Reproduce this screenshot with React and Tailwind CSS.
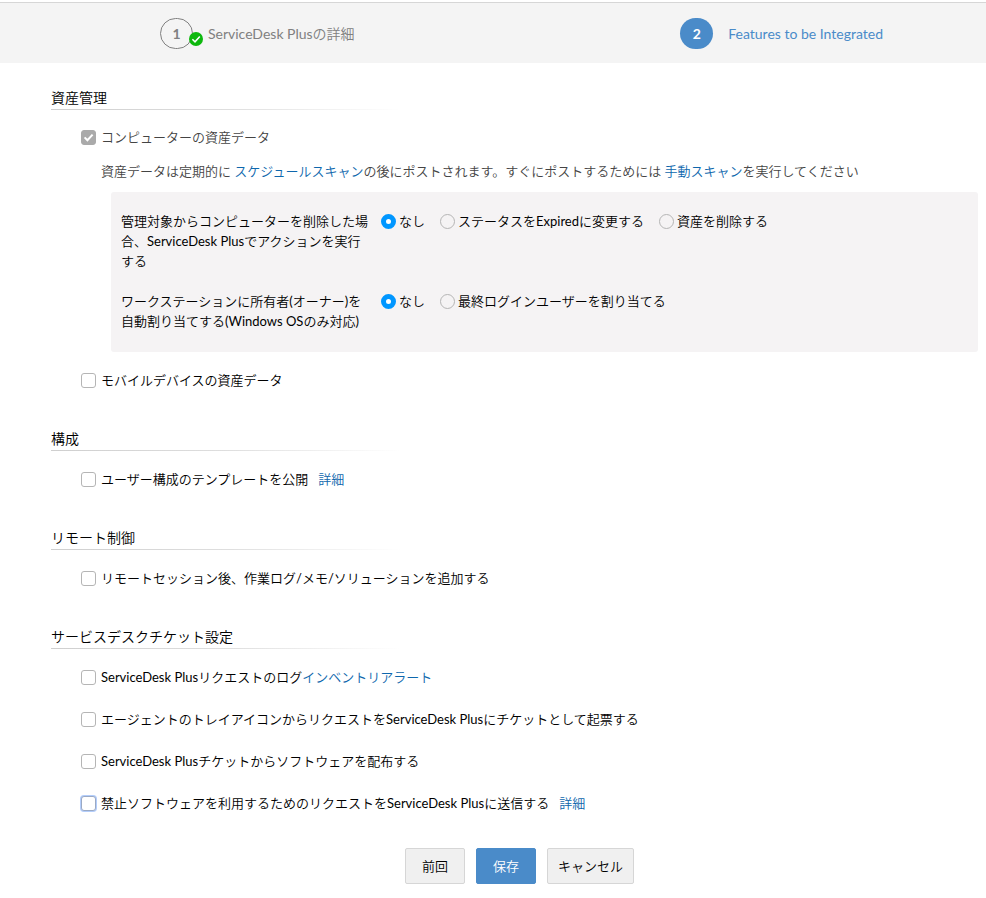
import React, { useState } from 'react';

const CheckMark = ({ className }) => (
  <svg viewBox="0 0 15 15" className={className} fill="none" stroke="#fff" strokeWidth="2" aria-hidden="true">
    <path d="M3.6 7.4 L6.4 10.2 L11.6 4.6" />
  </svg>
);

const SectionTitle = ({ children }) => (
  <div>
    <h2 className="pb-px text-sm leading-5 text-black">{children}</h2>
    <div className="h-px max-w-[350px] bg-gradient-to-r from-[#cfcfcf] via-[#dedede] to-transparent" />
  </div>
);

const CheckRow = ({ id, label, link, spaced, checked, onChange, disabled, focused }) => (
  <div className="flex items-center pl-[30px]">
    <span className="grid h-[15px] w-[15px] shrink-0">
      <input
        id={id}
        type="checkbox"
        checked={checked}
        onChange={onChange}
        disabled={disabled}
        className={`col-start-1 row-start-1 h-[15px] w-[15px] appearance-none rounded-[3px] border bg-white checked:border-[#aaa] checked:bg-[#aaa] ${
          focused ? 'border-[#9aa9c4] ring-1 ring-[#b3cdfb]' : 'border-[#b5b5b5]'
        }`}
      />
      {checked && <CheckMark className="pointer-events-none col-start-1 row-start-1 h-[15px] w-[15px]" />}
    </span>
    <label htmlFor={id} className={`pl-[5px] ${disabled ? 'text-[#444]' : 'text-black'}`}>
      {label}
    </label>
    {link && (
      <a href="#" className={`text-[#0e67ad] ${spaced ? 'ml-[10px]' : ''}`}>
        {link}
      </a>
    )}
  </div>
);

const RadioGroup = ({ name, title, options }) => {
  const [value, setValue] = useState(0);

  return (
    <div role="radiogroup" aria-labelledby={`${name}-title`} className="flex items-start gap-[10px]">
      <div id={`${name}-title`} className="w-[250px] shrink-0">
        {title}
      </div>
      <div className="flex flex-wrap gap-x-[15px]">
        {options.map((option, i) => (
          <label key={option} className="flex items-center gap-[3px]">
            <input
              type="radio"
              name={name}
              checked={value === i}
              onChange={() => setValue(i)}
              className="h-[15px] w-[15px] appearance-none rounded-full border border-[#b5b5b5] bg-transparent checked:border-5 checked:border-[#0096ff] checked:bg-white"
            />
            {option}
          </label>
        ))}
      </div>
    </div>
  );
};

const Steps = () => (
  <header className="mt-[2px] flex items-center justify-between border-t border-[#d6d6d6] bg-[#f4f4f4] pt-[15px] pr-[103px] pb-[14px] pl-40 text-sm">
    <div className="flex items-center gap-[15px] text-[#808080]">
      <span className="relative flex h-[31px] w-[33px] items-center justify-center rounded-full border border-[#808080] font-bold">
        1
        <svg viewBox="0 0 14 14" className="absolute -right-[11px] bottom-[2px] h-[14px] w-[14px]" aria-hidden="true">
          <circle cx="7" cy="7" r="7" fill="#0db80d" />
          <path d="M3.4 7.2 L6 9.8 L10.8 4.6" fill="none" stroke="#fff" strokeWidth="1.5" />
        </svg>
      </span>
      <span>ServiceDesk Plusの詳細</span>
    </div>
    <div className="flex items-center gap-[15px] text-[#4a8bc9]">
      <span className="flex h-[31px] w-[33px] items-center justify-center rounded-full bg-[#4a8bc9] font-bold text-white">
        2
      </span>
      <span>Features to be Integrated</span>
    </div>
  </header>
);

const App = () => {
  const [checks, setChecks] = useState({});

  const bind = (id) => ({
    id,
    checked: Boolean(checks[id]),
    onChange: () => setChecks((prev) => ({ ...prev, [id]: !prev[id] })),
  });

  return (
    <div
      lang="ja"
      className="bg-white font-['Lato','Noto_Sans_CJK_JP_DemiLight','Noto_Sans_CJK_JP',sans-serif] text-[13px] leading-5 text-black"
    >
      <Steps />

      <form onSubmit={(e) => e.preventDefault()}>
        <main className="flex flex-col gap-[39px] pt-[25px] pr-2 pl-[51px]">
          <section>
            <SectionTitle>資産管理</SectionTitle>
            <div className="pt-[17px]">
              <CheckRow id="computer" label="コンピューターの資産データ" checked disabled />
              <p className="pt-[14px] pl-[50px] text-[#444]">
                資産データは定期的に <a href="#" className="text-[#0e67ad]">スケジュールスキャン</a>
                の後にポストされます。すぐにポストするためには <a href="#" className="text-[#0e67ad]">手動スキャン</a>
                を実行してください
              </p>
              <div className="mt-[11px] mb-[18px] ml-[60px] flex flex-col gap-5 rounded-[3px] bg-[#f5f3f4] px-[10px] pt-[19px] pb-[21px]">
                <RadioGroup
                  name="remove-action"
                  title="管理対象からコンピューターを削除した場合、ServiceDesk Plusでアクションを実行する"
                  options={['なし', 'ステータスをExpiredに変更する', '資産を削除する']}
                />
                <RadioGroup
                  name="owner-assign"
                  title="ワークステーションに所有者(オーナー)を自動割り当てする(Windows OSのみ対応)"
                  options={['なし', '最終ログインユーザーを割り当てる']}
                />
              </div>
              <CheckRow {...bind('mobile')} label="モバイルデバイスの資産データ" />
            </div>
          </section>

          <section>
            <SectionTitle>構成</SectionTitle>
            <div className="pt-[18px]">
              <CheckRow {...bind('template')} label="ユーザー構成のテンプレートを公開" link="詳細" spaced />
            </div>
          </section>

          <section>
            <SectionTitle>リモート制御</SectionTitle>
            <div className="pt-[18px]">
              <CheckRow {...bind('remote')} label="リモートセッション後、作業ログ/メモ/ソリューションを追加する" />
            </div>
          </section>

          <section>
            <SectionTitle>サービスデスクチケット設定</SectionTitle>
            <div className="flex flex-col gap-[22px] pt-[18px]">
              <CheckRow {...bind('alerts')} label="ServiceDesk Plusリクエストのログ" link="インベントリアラート" />
              <CheckRow
                {...bind('tray')}
                label="エージェントのトレイアイコンからリクエストをServiceDesk Plusにチケットとして起票する"
              />
              <CheckRow {...bind('deploy')} label="ServiceDesk Plusチケットからソフトウェアを配布する" />
              <CheckRow
                {...bind('prohibited')}
                label="禁止ソフトウェアを利用するためのリクエストをServiceDesk Plusに送信する"
                link="詳細"
                spaced
                focused
              />
            </div>
          </section>
        </main>

        <div className="flex justify-center gap-[11px] pt-[35px] pr-[10px] pb-[14px] pl-[63px]">
          <button type="button" className="h-9 rounded-xs border border-[#d6d6d6] bg-[#f0f0f0] px-4 pb-px">
            前回
          </button>
          <button type="submit" className="h-9 rounded-xs border border-[#4a8bc9] bg-[#4a8bc9] px-4 pb-px text-white">
            保存
          </button>
          <button type="button" className="h-9 rounded-xs border border-[#d6d6d6] bg-[#f0f0f0] px-[10px] pb-px">
            キャンセル
          </button>
        </div>
      </form>
    </div>
  );
};

export default App;
